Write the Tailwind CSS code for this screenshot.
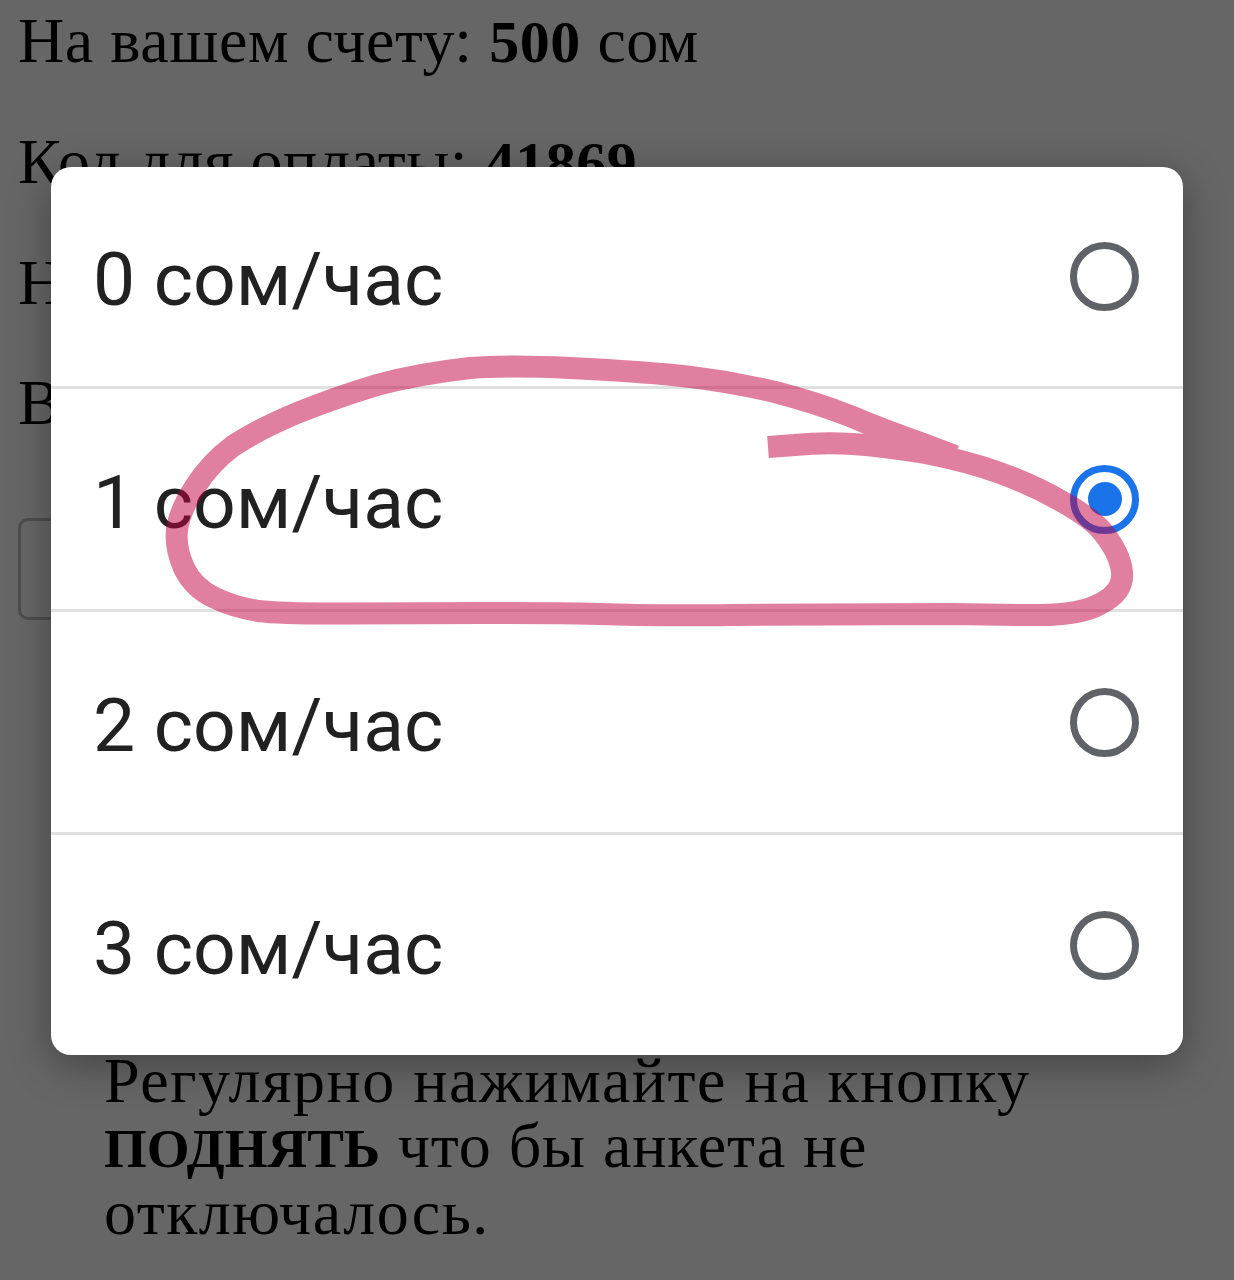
<!DOCTYPE html>
<html lang="ru">
<head>
<meta charset="utf-8">
<title>Оплата</title>
<script src="https://cdn.jsdelivr.net/npm/@tailwindcss/browser@4"></script>
</head>
<body class="bg-[#666666]">
<div class="relative w-[1234px] h-[1280px] overflow-hidden font-['Liberation_Serif',serif] text-black">

    <!-- page behind the dialog -->
    <div class="pl-[18px] pt-[6px] text-[64px] leading-[70px] tracking-[0.55px] whitespace-nowrap">
        <p class="mb-[50px]">На вашем счету: <b class="text-[60px]">500</b> сом</p>
        <p class="mb-[50px]">Код для оплаты: <b class="text-[60px]">41869</b></p>
        <p class="mb-[50px]">Номер</p>
        <p>Выберите</p>
        <div class="mt-[80px] w-[600px] h-[102px] border-[3px] border-[#4d4d4d] rounded-[10px]"></div>
        <div class="mt-[429px] ml-[86px] w-[1000px] leading-[64.5px] tracking-[1.5px]">
            <p>Регулярно нажимайте на кнопку<br><b class="text-[55px] tracking-normal">ПОДНЯТЬ</b> <span class="tracking-[0.9px]">что бы анкета не</span><br>отключалось.</p>
        </div>
    </div>

    <!-- dialog -->
    <div class="absolute left-[51px] top-[167px] w-[1132px] h-[888px] bg-white rounded-[20px] shadow-[0_10px_40px_rgba(0,0,0,0.35)] font-['Roboto',sans-serif] text-[75px] text-[#212121] flex flex-col">
        <div class="h-[222px] border-b-[3px] border-[#e0e0e0] flex items-center justify-between pl-[42px] pr-[44px]">
            <span class="mt-[6px]">0 сом/час</span>
            <span class="w-[69px] h-[69px] rounded-full border-[7px] border-[#5f6368]"></span>
        </div>
        <div class="h-[223px] border-b-[3px] border-[#e0e0e0] flex items-center justify-between pl-[42px] pr-[44px]">
            <span class="mt-[6px]">1 сом/час</span>
            <span class="w-[69px] h-[69px] rounded-full border-[7px] border-[#1a73e8] flex items-center justify-center">
                <span class="w-[34px] h-[34px] rounded-full bg-[#1a73e8]"></span>
            </span>
        </div>
        <div class="h-[223px] border-b-[3px] border-[#e0e0e0] flex items-center justify-between pl-[42px] pr-[44px]">
            <span class="mt-[6px]">2 сом/час</span>
            <span class="w-[69px] h-[69px] rounded-full border-[7px] border-[#5f6368]"></span>
        </div>
        <div class="flex-1 flex items-center justify-between pl-[42px] pr-[44px]">
            <span class="mt-[6px]">3 сом/час</span>
            <span class="w-[69px] h-[69px] rounded-full border-[7px] border-[#5f6368]"></span>
        </div>
    </div>

    <!-- pen scribble on top of the screenshot -->
    <svg class="absolute left-0 top-0" width="1234" height="1280" viewBox="0 0 1234 1280" fill="none">
        <path d="M768 447L795 445Q823 442 853 444Q883 446 925 453Q967 461 1000 473Q1033 485 1061 501Q1090 517 1102 531Q1120 553 1122 572Q1124 592 1100 604Q1080 615 1040 615Q1000 615 950 614Q883 614 733 615Q650 616 600 614Q550 613 483 613Q417 613 350 613.5Q283 614 258 611Q233 607 213 597Q193 587 184 568Q175 548 177 530Q179 512 195 487Q210 463 233 446Q257 430 297 413Q337 397 377 385Q417 374 470 368Q510 365 570 368Q650 372 691 377Q733 382 775 392Q817 403 850 416Q883 430 923 444L955 456" stroke="#c1003f" stroke-opacity="0.5" stroke-width="22" stroke-linecap="butt" stroke-linejoin="round"/>
    </svg>
</div>
</body>
</html>
